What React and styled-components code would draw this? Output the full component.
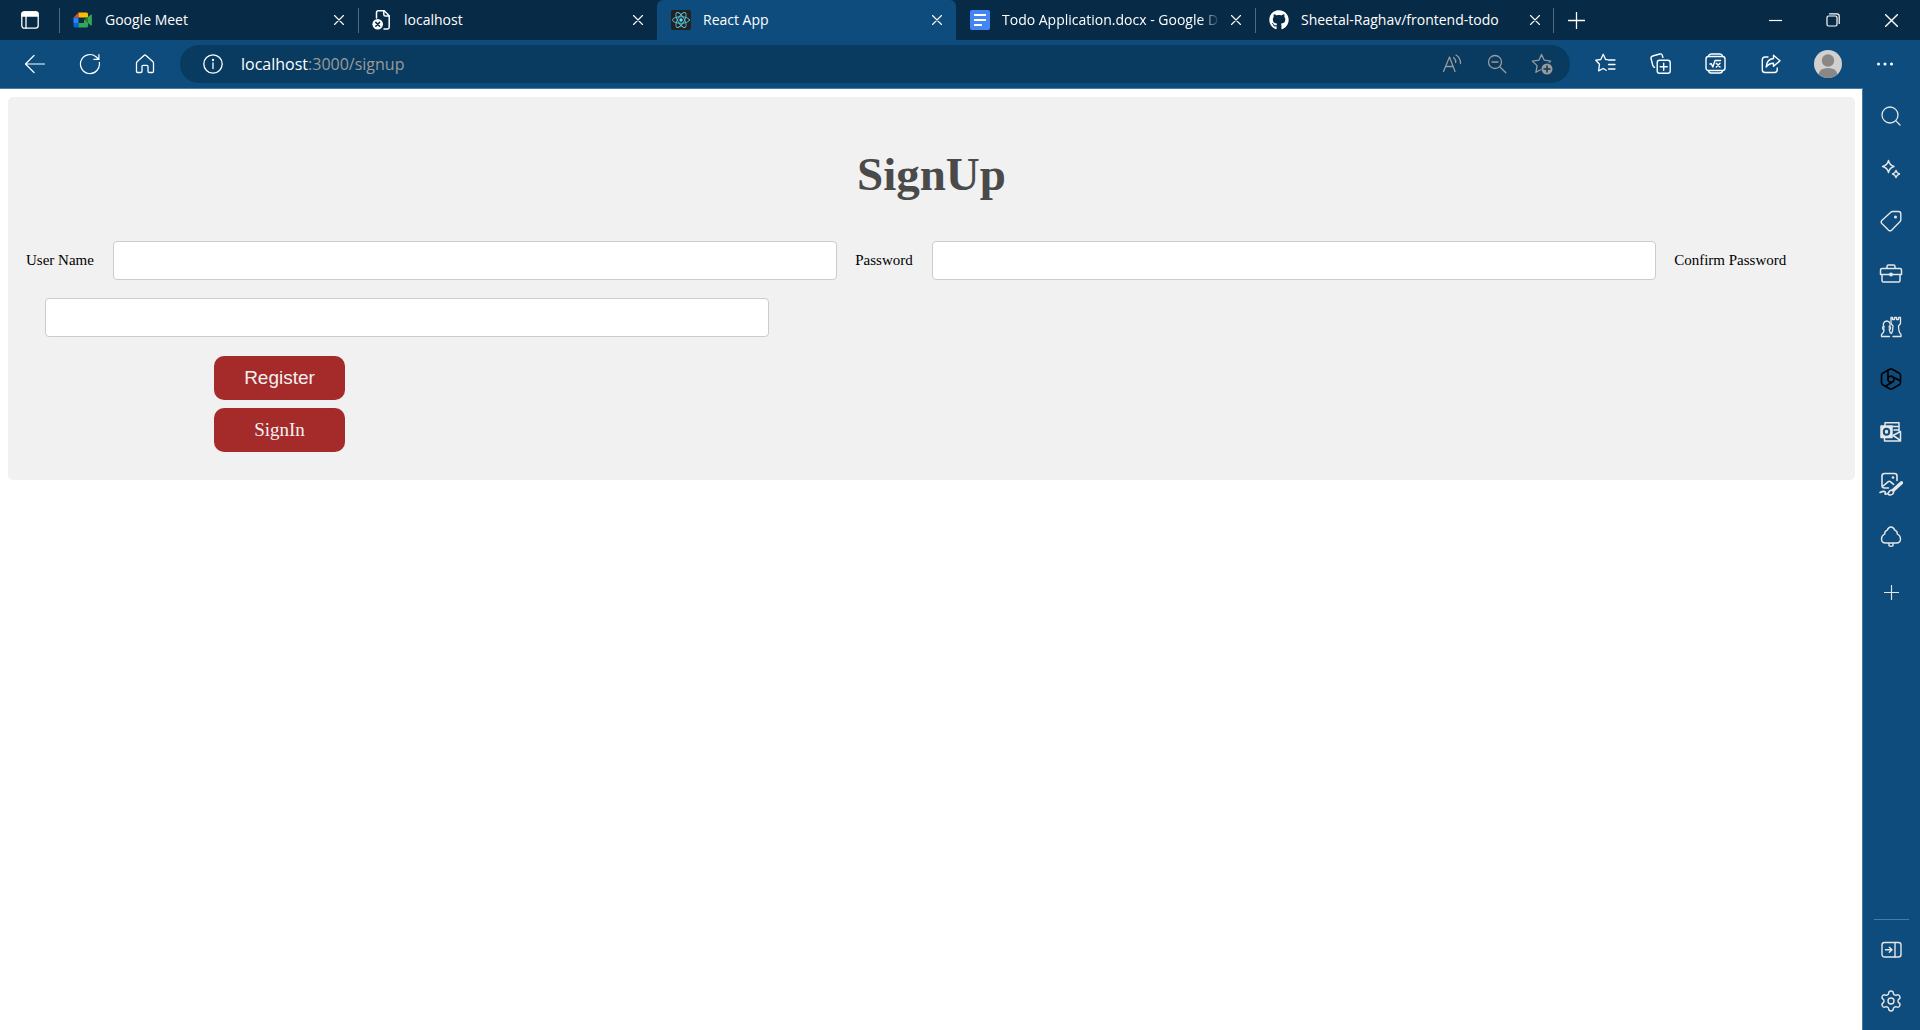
import React from "react";
import styled, { createGlobalStyle } from "styled-components";
import { Search, Settings } from "lucide-react";
import { FaGithub } from "react-icons/fa";

const GlobalStyle = createGlobalStyle`
  *, *::before, *::after { box-sizing: border-box; }
  html, body { margin: 0; padding: 0; }
  body { background: #fff; }
`;

const ui = `"Open Sans", "Noto Sans", sans-serif`;
const serif = `"Liberation Serif", "Times New Roman", serif`;

/* ---------- window frame ---------- */

const Window = styled.div`
  display: flex;
  flex-direction: column;
  height: 100vh;
  overflow: hidden;
  font-family: ${ui};
`;

const TabStrip = styled.header`
  display: flex;
  flex: none;
  height: 40px;
  background: #072a46;
  color: #fff;
`;

const PlainButton = styled.button`
  display: flex;
  flex: none;
  align-items: center;
  justify-content: center;
  padding: 0;
  border: 0;
  background: none;
  color: inherit;
  font: inherit;
  cursor: pointer;
`;

const TabActions = styled(PlainButton)`
  width: 59px;
  padding-left: 1px;
`;

const Tabs = styled.nav`
  display: flex;
  min-width: 0;
`;

const Tab = styled.div`
  display: flex;
  flex: 0 1 299px;
  width: 299px;
  min-width: 0;
  align-items: center;
  padding: 0 14px 0 0;
  background: ${(p) => (p.$active ? "#0d4c7c" : "transparent")};
  border-radius: 6px 6px 0 0;

  &::before {
    content: "";
    width: 1px;
    height: 25px;
    margin-right: 13px;
    background: ${(p) => (p.$separator ? "#526a7e" : "transparent")};
  }
`;

const TabTitle = styled.span`
  flex: 1;
  min-width: 0;
  margin: 0 4px 0 12px;
  overflow: hidden;
  white-space: nowrap;
  font-size: 14px;
  line-height: 20px;
  ${(p) => p.$fade && "mask-image: linear-gradient(to right, #000 88%, transparent 97%);"}
`;

const TabClose = styled(PlainButton)`
  width: 10px;
  height: 20px;
`;

const NewTab = styled(PlainButton)`
  width: 43px;
  border-left: 1px solid transparent;
  position: relative;

  &::before {
    content: "";
    position: absolute;
    left: -2px;
    top: 8px;
    width: 1px;
    height: 25px;
    background: #526a7e;
  }
`;

const WindowControls = styled.div`
  display: flex;
  margin-left: auto;
`;

const WindowButton = styled(PlainButton)`
  width: 58px;
`;

/* ---------- toolbar ---------- */

const Toolbar = styled.div`
  display: flex;
  flex: none;
  align-items: center;
  height: 48px;
  padding: 0 8px 1px 7px;
  background: #0d4c7c;
  color: #fff;
`;

const ToolButton = styled(PlainButton)`
  width: ${(p) => p.$width || 55}px;
  height: 38px;
`;

const AddressBar = styled.div`
  display: flex;
  flex: 1;
  align-items: center;
  min-width: 0;
  height: 38px;
  margin: 0 8px;
  padding: 0 6px 0 23px;
  border-radius: 19px;
  background: #093a5f;
`;

const Url = styled.div`
  flex: 1;
  min-width: 0;
  margin-left: 18px;
  overflow: hidden;
  white-space: nowrap;
  font-size: 16px;
  line-height: 24px;
  color: #9a9a9a;
`;

const Host = styled.span`
  color: #fff;
`;

const AddressButton = styled(PlainButton)`
  width: 45px;
  height: 38px;
  color: #9a9a9a;
`;

/* ---------- body ---------- */

const Body = styled.div`
  display: flex;
  flex: 1;
  min-height: 0;
  background: #0d4c7c;
`;

const Viewport = styled.main`
  flex: 1;
  min-width: 0;
  padding: 8px 7px 8px 8px;
  overflow: auto;
  border: solid #4a7aa0;
  border-width: 1px 1px 0 0;
  background: #fff;
  font-family: ${serif};
`;

const Sidebar = styled.aside`
  display: flex;
  flex: none;
  flex-direction: column;
  width: 57px;
  padding: 2px 1px 3px 0;
  color: #e6e6e6;
`;

const SidebarApps = styled.div`
  display: flex;
  flex: none;
  flex-direction: column;
  height: 473px;
`;

const SideButton = styled(PlainButton)`
  width: 100%;
  flex: ${(p) => (p.$fill ? "1" : "none")};
  height: 52px;
`;

const SidebarAdd = styled(SideButton)`
  margin-top: 3px;
`;

const SidebarFooter = styled.div`
  display: flex;
  flex-direction: column;
  margin-top: auto;

  &::before {
    content: "";
    height: 1px;
    margin: 0 10px 3px 11px;
    background: #4a7aa0;
  }
`;

/* ---------- sign-up form ---------- */

const Card = styled.form`
  padding: 47px 18px 28px;
  border-radius: 5px;
  background: #f1f1f1;
`;

const Title = styled.h1`
  margin: 0 0 37px;
  font-size: 47px;
  line-height: 60px;
  text-align: center;
  color: #4a4a4a;
`;

const Fields = styled.div`
  display: flex;
  flex-wrap: wrap;
  align-items: center;
  row-gap: 18px;
`;

const Label = styled.label`
  padding-bottom: 1px;
  font-size: 15px;
  line-height: 18px;
  color: #000;
`;

const Field = styled.input`
  width: 40%;
  height: 39px;
  margin: 0 18px 0 19px;
  padding: 0 12px;
  border: 1px solid #ccc;
  border-radius: 4px;
  background: #fff;
  outline: none;
  font-size: 15px;
`;

const Actions = styled.div`
  display: flex;
  flex-direction: column;
  align-items: flex-start;
  gap: 8px;
  margin: 19px 0 0 188px;
`;

const actionStyle = `
  display: flex;
  align-items: center;
  justify-content: center;
  width: 131px;
  height: 44px;
  padding: 0;
  border: 0;
  border-radius: 10px;
  background: #a52a2a;
  color: #f1f1f1;
  font-size: 19px;
  line-height: 24px;
  text-decoration: none;
  cursor: pointer;
`;

const RegisterButton = styled.button`
  ${actionStyle}
  font-family: "Liberation Sans", Arial, sans-serif;
`;

const SignInLink = styled.a`
  ${actionStyle}
`;

/* ---------- icons ---------- */

const Glyph = styled.svg`
  display: block;
  flex: none;
  fill: none;
  stroke: currentColor;
  stroke-width: ${(p) => p.$stroke || 1.2};
  stroke-linecap: round;
  stroke-linejoin: round;
`;

const Icon = ({ size = 20, stroke, children, box }) => (
  <Glyph width={size} height={size} viewBox={`0 0 ${box || size} ${box || size}`} $stroke={stroke} aria-hidden="true">
    {children}
  </Glyph>
);

const CloseIcon = ({ size = 10 }) => (
  <Icon size={size} box={10} stroke={1.1}>
    <path d="M0.5 0.5 9.5 9.5M9.5 0.5 0.5 9.5" />
  </Icon>
);

const TabActionsIcon = () => (
  <Icon size={18} stroke={1.3}>
    <rect x="0.8" y="0.8" width="16.4" height="16.4" rx="2.6" />
    <path d="M1 3.2Q1 1 3.2 1h11.6Q17 1 17 3.2V5H1z" fill="currentColor" />
    <path d="M5 5v12" />
  </Icon>
);

const MeetIcon = () => (
  <Icon size={20}>
    <g stroke="none">
      <path d="M5.500 2.500V7.500H0.500z" fill="#ea4335" />
      <path d="M0.500 7.500h5v5.500h-5z" fill="#2684fc" />
      <path d="M0.500 13h5v4.500H2a1.500 1.500 0 0 1-1.500-1.500z" fill="#0066da" />
      <path d="M5.500 2.500h8a1.500 1.500 0 0 1 1.500 1.500v3.500h-9.500z" fill="#ffba00" />
      <path d="M5.500 13h5.500V10l4-3V16a1.500 1.500 0 0 1-1.500 1.500h-8z" fill="#34a853" />
      <path d="M12 10 17.500 4.800q1.300-.8 1.300.5v9.400q0 1.300-1.300.5L15 13z" fill="#34a853" />
      <path d="M11 10 15 7v6z" fill="#188038" />
    </g>
  </Icon>
);

const BrokenPageIcon = () => (
  <Icon size={20} stroke={1.5}>
    <path d="M4.500 8V2.500q0-1.700 1.700-1.700h6l5 5v11.500q0 1.700-1.700 1.700H12" />
    <path d="M11.800 1v3.400q0 1.700 1.700 1.700h3.500" />
    <circle cx="5.700" cy="14.300" r="5.300" fill="#fff" stroke="none" />
    <path d="M3.800 12.400l3.800 3.800M7.600 12.400l-3.800 3.800" stroke="#072a46" />
  </Icon>
);

const ReactIcon = () => (
  <Icon size={20} stroke={0.9}>
    <rect width="20" height="20" rx="2" fill="#222" stroke="none" />
    <g stroke="#58c4dc">
      <ellipse cx="10" cy="10" rx="8.500" ry="3.300" />
      <ellipse cx="10" cy="10" rx="8.500" ry="3.300" transform="rotate(60 10 10)" />
      <ellipse cx="10" cy="10" rx="8.500" ry="3.300" transform="rotate(120 10 10)" />
    </g>
    <circle cx="10" cy="10" r="1.700" fill="#61dafb" stroke="none" />
  </Icon>
);

const DocsIcon = () => (
  <Icon size={20}>
    <rect width="20" height="20" rx="2" fill="#4285f4" stroke="none" />
    <path d="M4 5h12M4 10h12M4 15h8" stroke="#fff" strokeWidth="2" strokeLinecap="butt" />
  </Icon>
);

const PlusIcon = ({ size = 17 }) => (
  <Icon size={size} box={17} stroke={1.3}>
    <path d="M8.500 0.500v16M0.500 8.500h16" />
  </Icon>
);

const MinimizeIcon = () => (
  <Icon size={13}>
    <path d="M0 6.500h13" strokeLinecap="butt" />
  </Icon>
);

const RestoreIcon = () => (
  <Icon size={14}>
    <rect x="1" y="3" width="10" height="10" rx="1.500" />
    <path d="M3.500 0.800h7.500q2.200 0 2.200 2.200v7.500" />
  </Icon>
);

const BackIcon = () => (
  <Icon size={22}>
    <path d="M1.500 11h19M10 2.500 1.500 11l8.500 8.500" />
  </Icon>
);

const RefreshIcon = () => (
  <Icon size={22}>
    <path d="M20.300 9.300A9.500 9.500 0 1 1 17 3.700L19.700 6.200M19.900 1.500v4.900h-5" />
  </Icon>
);

const HomeIcon = () => (
  <Icon size={20} stroke={1.3}>
    <path d="M1.500 9.200q0-1 .8-1.700L9 1.400q1-.8 2 0l6.700 6.100q.8.7.8 1.700v8q0 1.300-1.300 1.300h-3q-1.200 0-1.200-1.300v-4.700q0-1.200-1.200-1.200H8.200Q7 11.300 7 12.500v4.700q0 1.300-1.200 1.300h-3q-1.300 0-1.300-1.300z" />
  </Icon>
);

const InfoIcon = () => (
  <Icon size={20} stroke={1.3}>
    <circle cx="10" cy="10" r="9.200" />
    <path d="M10 8.800v5.700" />
    <circle cx="10" cy="6" r="0.500" fill="currentColor" />
  </Icon>
);

const ReadAloudIcon = () => (
  <Icon size={20} stroke={1.3}>
    <path d="M1.500 17.500 7.500 3l5.500 14.500M3.500 12.500h7.600M11.500 3.500q2.500 2 2.200 5M14 1q4.800 3 4.500 8.500" />
  </Icon>
);

const ZoomOutIcon = () => (
  <Icon size={20} stroke={1.3}>
    <circle cx="8" cy="8" r="6.500" />
    <path d="M5 8h6M12.800 12.800l6 6" />
  </Icon>
);

const StarAddIcon = () => (
  <Icon size={22} stroke={1.3}>
    <path d="M10.500 1.500 7.900 7.200 1.300 8.100l4.800 4.500-1.200 6.700 4.600-2.500M10.500 1.500l2.800 5.700 6.300.9-1.200 1.300" />
    <circle cx="16" cy="16" r="5.500" fill="currentColor" stroke="none" />
    <path d="M16 13v6M13 16h6" stroke="#093a5f" strokeWidth="1.500" />
  </Icon>
);

const FavoritesIcon = () => (
  <Icon size={21} stroke={1.3}>
    <path d="M12.500 6.700 10.600 6.500 8.200 1.300 5.800 6.500l-5 .7 3.700 4-.9 6.600 4.600-2.300 3 1.800M13.500 7H20M13.500 11.500H20M13.500 16H20" />
  </Icon>
);

const CollectionsIcon = () => (
  <Icon size={21} stroke={1.4}>
    <rect x="7.200" y="7.200" width="13" height="13" rx="2.300" />
    <path d="M13.700 10.200v7M10.200 13.700h7" />
    <path d="M4.500 14.300q-1.300-.3-1.600-1.600L1 5.500Q.7 3.500 2.600 3L9.800 1q2-.5 2.500 1.400l.5 1.900" />
  </Icon>
);

const MathIcon = () => (
  <Icon size={21} stroke={1.4}>
    <rect x="1" y="3.500" width="19" height="14" rx="2.500" />
    <path d="M3.500 3q.5-2 2.500-2h9q2 0 2.500 2M3.500 18q.5 2 2.500 2h9q2 0 2.500-2" />
    <path d="M5 11l1.300-.3 1.500 3.300L10 7.500h5.500M11.300 10.200l3.700 3.800M15 10.200 11.300 14" />
  </Icon>
);

const ShareIcon = () => (
  <Icon size={20} stroke={1.4}>
    <path d="M7 3H4Q1.300 3 1.300 5.700v10q0 2.800 2.700 2.800h9.500q2.700 0 2.700-2.700V14" />
    <path d="M12.500 1.300 19 6.800l-6.500 5.500V9.200Q8 9 5.200 13 5.800 5 12.500 4.500z" />
  </Icon>
);

const AvatarIcon = () => (
  <Icon size={28}>
    <g stroke="none">
      <circle cx="14" cy="14" r="14" fill="#d2d0ce" />
      <circle cx="14" cy="10.500" r="6.200" fill="#8a8886" />
      <path d="M4.500 24.300Q6 18 14 18t9.500 6.300A14 14 0 0 1 4.500 24.300z" fill="#8a8886" />
    </g>
  </Icon>
);

const DotsIcon = () => (
  <Icon size={18}>
    <g fill="currentColor" stroke="none">
      <circle cx="2.500" cy="9" r="1.500" />
      <circle cx="9" cy="9" r="1.500" />
      <circle cx="15.500" cy="9" r="1.500" />
    </g>
  </Icon>
);

const SparkleIcon = () => (
  <Icon size={20} stroke={1.4}>
    <path d="M7.500 1.500Q8.500 6.200 13 7.500 8.500 8.800 7.500 13.500 6.500 8.800 1.500 7.500 6.500 6.200 7.500 1.500zM15 11.500q.7 2.800 3.500 3.500-2.800.7-3.500 3.500-.7-2.800-3.500-3.500 2.800-.7 3.500-3.500z" />
  </Icon>
);

const TagIcon = () => (
  <Icon size={22} stroke={1.4}>
    <path d="M12.500 1.500h6q2.300 0 2.300 2.300v6q0 1-.7 1.700l-8.500 8.700q-1.500 1.300-3 0L1.800 13.500q-1.300-1.500 0-3l9-8.300q.7-.7 1.700-.7z" />
    <circle cx="15.500" cy="7" r="1.500" fill="currentColor" stroke="none" />
  </Icon>
);

const BriefcaseIcon = () => (
  <Icon size={24} stroke={1.5}>
    <path d="M1.500 8q0-1.500 1.500-1.500h18q1.500 0 1.500 1.500v4.500h-21zM3 12.500v6q0 1.500 1.500 1.500h15q1.500 0 1.500-1.500v-6M8 6V4.500Q8 3 9.500 3h5Q16 3 16 4.500V6" />
    <circle cx="12" cy="12.500" r="2" fill="currentColor" stroke="none" />
  </Icon>
);

const ChessIcon = () => (
  <Icon size={22} stroke={1.3}>
    <path d="M9.500 20.500h-8v-2q2.700-2 2.500-5.500H2.700v-2h1.500Q2.700 9 3.500 7.200 4.500 5 6.800 5t3.200 2.200Q10.800 9 9 11h1.500v2H9.200q.2 2.500 1.300 4" />
    <path d="M13 20.500h8v-2.200q-2.500-2-2.500-8.300l2-2.500v-6h-2v2h-2v-2h-2v2h-2v-2h-1.500v6l2 2.500q0 5-1.500 7.500" />
  </Icon>
);

const HexIcon = () => (
  <Icon size={22} stroke={1.6}>
    <path d="M9.700 1.300q1.300-.6 2.600 0l7 3.900q1.200.8 1.200 2.200v7.200q0 1.400-1.200 2.200l-7 3.900q-1.300.6-2.600 0l-7-3.900q-1.200-.8-1.200-2.200V7.400q0-1.400 1.200-2.200z" />
    <circle cx="11" cy="11.300" r="3" />
    <path d="M8 2.500v9M11.500 8.200l8.700 4.500M12.800 13.800 5.500 18.300" />
  </Icon>
);

const OutlookIcon = () => (
  <Icon size={22} stroke={1.5}>
    <path d="M5 5V1.700h14v8M11.500 5.500H19M4.500 17v3h16v-9.500L13 14.500l7 4.500M14 9h4.500" />
    <path d="M1 5h11v11.500H1z" fill="currentColor" />
    <ellipse cx="6.500" cy="10.700" rx="2.700" ry="3" stroke="#0d4c7c" strokeWidth="2" />
  </Icon>
);

const DrawIcon = () => (
  <Icon size={24} stroke={1.6}>
    <path d="M18 8.500V4q0-2.500-2.500-2.500h-10Q3 1.500 3 4v9.500Q3 16 5.500 16h4M3.500 14.500 9 9.800q1.300-1 2.600 0l3 2.500" />
    <circle cx="14" cy="5.500" r="1.300" fill="currentColor" stroke="none" />
    <path d="M22.500 10.800 14.500 18" strokeWidth="3.500" />
    <path d="M1 20.500q3-1.500 4.500-1t.5 2q0 1.500 3 0 1.500-3.500 4-3.500 2.500 1.300 1 3.700-2 2-4.500.8" />
  </Icon>
);

const TreeIcon = () => (
  <Icon size={22} stroke={1.4}>
    <path d="M11 1q2.600 0 3.800 3.200 2.700 1 2.500 3.800 3.200 1.700 3.200 5 0 4-4.200 4H5.700q-4.200 0-4.200-4 0-3.300 3.200-5-.2-2.800 2.500-3.800Q8.400 1 11 1zM9 17.200v2.500q2 1.300 4 0v-2.500" />
  </Icon>
);

const PanelIcon = () => (
  <Icon size={21} stroke={1.4}>
    <rect x="1" y="3.500" width="19" height="14.500" rx="2.500" />
    <path d="M14 3.500V18M4.500 10.700h6.300M8.300 8.200l2.700 2.500-2.700 2.500" />
  </Icon>
);

const Dark = styled.span`
  display: flex;
  color: #000;
`;

/* ---------- data ---------- */

const tabs = [
  { title: "Google Meet", icon: <MeetIcon />, separator: true },
  { title: "localhost", icon: <BrokenPageIcon />, separator: true },
  { title: "React App", icon: <ReactIcon />, active: true },
  { title: "Todo Application.docx - Google D", icon: <DocsIcon />, fade: true },
  { title: "Sheetal-Raghav/frontend-todo", icon: <FaGithub size={20} />, separator: true },
];

const apps = [
  ["Search", <Search size={24} strokeWidth={1.3} />],
  ["Discover", <SparkleIcon />],
  ["Shopping", <TagIcon />],
  ["Tools", <BriefcaseIcon />],
  ["Games", <ChessIcon />],
  ["Microsoft 365", <Dark><HexIcon /></Dark>],
  ["Outlook", <OutlookIcon />],
  ["Image Creator", <DrawIcon />],
  ["E-tree", <TreeIcon />],
];

export default function App() {
  return (
    <Window>
      <GlobalStyle />
      <TabStrip>
        <TabActions aria-label="Tab actions">
          <TabActionsIcon />
        </TabActions>
        <Tabs>
          {tabs.map((tab) => (
            <Tab key={tab.title} $active={tab.active} $separator={tab.separator}>
              {tab.icon}
              <TabTitle $fade={tab.fade}>{tab.title}</TabTitle>
              <TabClose aria-label={`Close ${tab.title}`}>
                <CloseIcon />
              </TabClose>
            </Tab>
          ))}
        </Tabs>
        <NewTab aria-label="New tab">
          <PlusIcon />
        </NewTab>
        <WindowControls>
          <WindowButton aria-label="Minimize"><MinimizeIcon /></WindowButton>
          <WindowButton aria-label="Restore"><RestoreIcon /></WindowButton>
          <WindowButton aria-label="Close"><CloseIcon size={13} /></WindowButton>
        </WindowControls>
      </TabStrip>

      <Toolbar>
        <ToolButton aria-label="Back"><BackIcon /></ToolButton>
        <ToolButton aria-label="Refresh"><RefreshIcon /></ToolButton>
        <ToolButton aria-label="Home"><HomeIcon /></ToolButton>
        <AddressBar>
          <PlainButton aria-label="Site information"><InfoIcon /></PlainButton>
          <Url><Host>localhost</Host>:3000/signup</Url>
          <AddressButton aria-label="Read aloud"><ReadAloudIcon /></AddressButton>
          <AddressButton aria-label="Zoom out"><ZoomOutIcon /></AddressButton>
          <AddressButton aria-label="Add to favorites"><StarAddIcon /></AddressButton>
        </AddressBar>
        <ToolButton aria-label="Favorites"><FavoritesIcon /></ToolButton>
        <ToolButton aria-label="Collections"><CollectionsIcon /></ToolButton>
        <ToolButton aria-label="Math solver"><MathIcon /></ToolButton>
        <ToolButton aria-label="Share"><ShareIcon /></ToolButton>
        <ToolButton $width={60} aria-label="Profile"><AvatarIcon /></ToolButton>
        <ToolButton $width={54} aria-label="More"><DotsIcon /></ToolButton>
      </Toolbar>

      <Body>
        <Viewport>
          <Card onSubmit={(e) => e.preventDefault()}>
            <Title>SignUp</Title>
            <Fields>
              <Label htmlFor="username">User Name</Label>
              <Field id="username" type="text" />
              <Label htmlFor="password">Password</Label>
              <Field id="password" type="password" />
              <Label htmlFor="confirm">Confirm Password</Label>
              <Field id="confirm" type="password" />
            </Fields>
            <Actions>
              <RegisterButton type="submit">Register</RegisterButton>
              <SignInLink href="#signin">SignIn</SignInLink>
            </Actions>
          </Card>
        </Viewport>
        <Sidebar>
          <SidebarApps>
            {apps.map(([name, icon]) => (
              <SideButton key={name} $fill aria-label={name}>{icon}</SideButton>
            ))}
          </SidebarApps>
          <SidebarAdd aria-label="Add"><PlusIcon size={15} /></SidebarAdd>
          <SidebarFooter>
            <SideButton aria-label="Hide sidebar"><PanelIcon /></SideButton>
            <SideButton aria-label="Settings"><Settings size={24} strokeWidth={1.4} /></SideButton>
          </SidebarFooter>
        </Sidebar>
      </Body>
    </Window>
  );
}
